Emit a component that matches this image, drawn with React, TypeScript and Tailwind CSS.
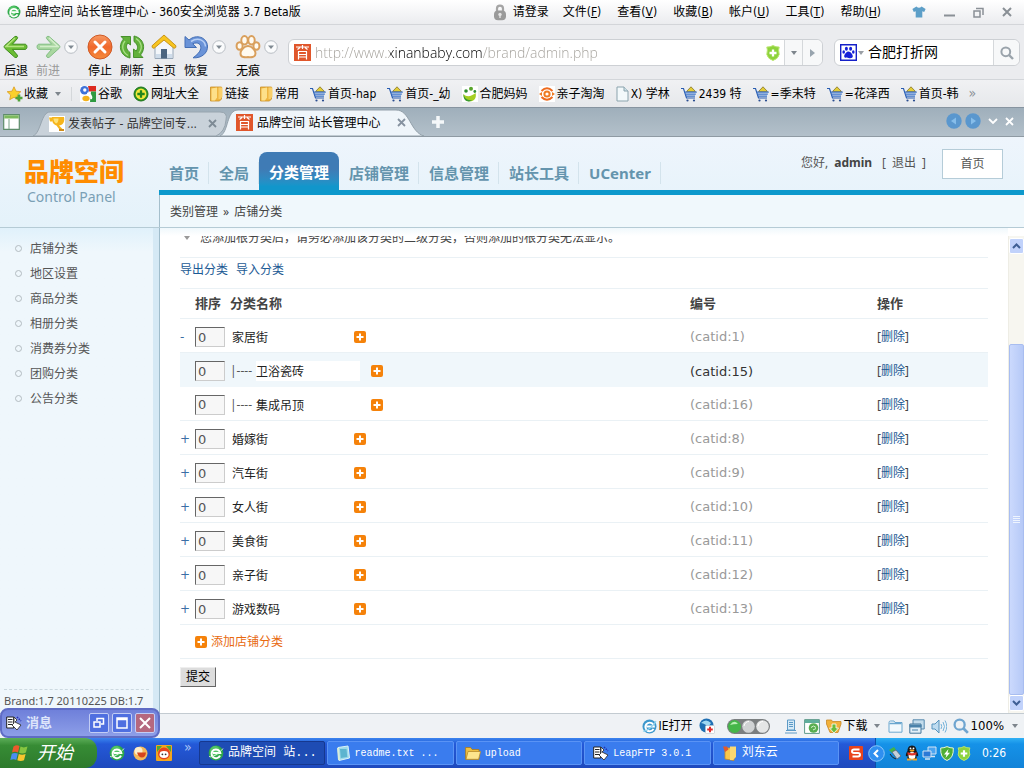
import { useState } from 'react';
import type { ReactNode } from 'react';
import clsx from 'clsx';

const uiFont = 'font-["DejaVu_Sans_Condensed","Noto_Sans_CJK_SC",sans-serif]';
const pageFont = 'font-["Noto_Sans","Noto_Sans_CJK_SC",sans-serif]';
const taskFont = 'font-["Liberation_Mono","Noto_Sans_CJK_SC",monospace]';

type IconProps = { className?: string };

/* ---------- icons ---------- */

const BrowserIcon = ({ className = 'size-4' }: IconProps) => (
  <svg viewBox="0 0 16 16" className={className}>
    <circle cx="8" cy="8" r="7.4" fill="#2fa84a" />
    <circle cx="7" cy="6" r="5" fill="#62d072" opacity="0.7" />
    <path d="M12 10.6A4.4 4.4 0 1 1 12.3 8H5" fill="none" stroke="#fff" strokeWidth="2" />
    <path d="M1 11.5C4 13 12 8 15 3.5" fill="none" stroke="#d9f7d9" strokeWidth="0.9" />
  </svg>
);

const LockIcon = () => (
  <svg viewBox="0 0 14 17" className="h-[17px] w-3.5">
    <path d="M4 8V4.6a3 3 0 0 1 6 0V8" fill="none" stroke="#a5a5a5" strokeWidth="2.2" />
    <rect x="1" y="6.6" width="12" height="9.6" rx="4" fill="#9a9a9a" />
    <circle cx="7" cy="10.4" r="1.7" fill="#e4e4e4" />
    <path d="M6.3 11h1.4v3H6.3z" fill="#e4e4e4" />
  </svg>
);

const ShirtIcon = () => (
  <svg viewBox="0 0 14 12" className="h-3 w-3.5">
    <path d="M4.4.6Q7 3 9.6.6L13.6 3 12.2 6l-1.900-.7v6.200H3.700V5.300L1.800 6 .4 3z" fill="#5d9fc8" />
  </svg>
);

const BackIcon = () => (
  <svg viewBox="0 0 26 24" className="h-6 w-[26px]">
    <path d="M12 1.500c1.500-.6 3.400.5 2.300 2.200L9.400 9.200H22c2.600 0 2.600 5.200 0 5.200H9.400l4.900 5.700c1 1.800-1 3-2.500 2.200L1.500 13Q.6 11.800 1.500 10.700z" fill="#6cbd34" stroke="#3f8c1c" strokeWidth="1" />
    <path d="M12 3 3 11.500H21" fill="none" stroke="#b4e37f" strokeWidth="1.500" />
  </svg>
);

const ForwardIcon = () => (
  <svg viewBox="0 0 26 24" className="h-6 w-[26px]">
    <path d="M14 1.500c-1.500-.6-3.400.5-2.300 2.200l4.900 5.500H4c-2.600 0-2.600 5.200 0 5.200h12.600l-4.900 5.700c-1 1.800 1 3 2.500 2.200L24.500 13q.9-1.200 0-2.300z" fill="#a9d7a0" stroke="#83bd84" strokeWidth="1" />
    <path d="m14 3 9 8.500H5" fill="none" stroke="#d4eecb" strokeWidth="1.500" />
  </svg>
);

const StopIcon = () => (
  <svg viewBox="0 0 26 26" className="size-[26px]">
    <defs>
      <linearGradient id="stop" x1="0" y1="0" x2="0" y2="1">
        <stop offset="0" stopColor="#f79a64" />
        <stop offset="0.5" stopColor="#f0682c" />
        <stop offset="1" stopColor="#f58b3c" />
      </linearGradient>
    </defs>
    <circle cx="13" cy="13" r="12" fill="url(#stop)" stroke="#cf5a26" />
    <path d="m8 8 10 10M18 8 8 18" stroke="#fff" strokeWidth="3" strokeLinecap="round" />
  </svg>
);

const RefreshIcon = () => (
  <svg viewBox="0 0 26 26" className="size-[26px]">
    <g fill="#62b13b" stroke="#3d8a22" strokeWidth="0.9" strokeLinejoin="round">
      <path d="M2 2.500h9.500V11L8.800 8.900C6.600 12 7 15.500 11 18.500v5.500C1.500 22-1.500 12 4.500 5z" />
      <path d="M24 23.500h-9.500V15l2.700 2.100c2.200-3.100 1.800-6.600-2.200-9.600V2C24.500 4 27.500 14 21.500 21z" />
    </g>
    <path d="M6 7C2 12 3.500 18 9 21.500M20 19c4-5 2.500-11-3-14.500" fill="none" stroke="#a9df86" strokeWidth="1.300" />
  </svg>
);

const HomeIcon = () => (
  <svg viewBox="0 0 26 26" className="size-[26px]">
    <path d="M4 12v12.500h18V12l-9-8z" fill="#f3f6fa" stroke="#97a7b8" />
    <path d="M5 20h16v4H5z" fill="#cfdcea" />
    <path d="M10 15h6v9.500h-6z" fill="#4c6580" />
    <path d="M13 1 1 11.800q-.3 2.400 2 2.500L13 6l10 8.300q2.300-.1 2-2.500z" fill="#f8c51f" stroke="#c8941a" />
  </svg>
);

const UndoIcon = () => (
  <svg viewBox="0 0 26 26" className="size-[26px]">
    <path d="M2 2.500 2 13.500h11.500L9.700 9.800c5-2.300 9 .5 8 5-.6 3.200-3.500 6-7.700 9C18.500 24.500 25 19 24.500 12 24 3.500 13.500-.5 6 6z" fill="#6a93d8" stroke="#446fb5" strokeLinejoin="round" />
    <path d="M8 7.500C15 3 22 6 22.500 12.500" fill="none" stroke="#b6cff5" strokeWidth="1.500" />
  </svg>
);

const pads = (
  <>
    <path d="M13 13c3 0 6.500 3.500 6.500 6.500 0 3-3.500 3-6.500 2.500-3 .5-6.500.5-6.500-2.500C6.500 16.500 10 13 13 13z" />
    <ellipse cx="9.500" cy="6.300" rx="2.200" ry="3.200" />
    <ellipse cx="16.500" cy="6.300" rx="2.200" ry="3.200" />
    <ellipse cx="4.600" cy="12" rx="2" ry="2.800" />
    <ellipse cx="21.400" cy="12" rx="2" ry="2.800" />
  </>
);

const PawIcon = () => (
  <svg viewBox="0 0 26 26" className="size-[26px]">
    <g fill="#e3ad6e" stroke="#d99f5c" strokeWidth="4">{pads}</g>
    <g fill="#fffaf0">{pads}</g>
  </svg>
);

const RoundDrop = () => (
  <svg viewBox="0 0 14 14" className="size-3.5">
    <circle cx="7" cy="7" r="6.300" fill="#fafbfc" stroke="#b9bec4" />
    <path d="M4 5.500h6L7 9z" fill="#7f8a92" />
  </svg>
);

/* red seal used as the site's favicon */
const SealIcon = () => (
  <svg viewBox="0 0 17 17" className="size-[17px]">
    <path d="M0 0h17v17H0z" fill="#e0562b" />
    <path d="M2 3h13M8.500 1v4M3.500 5.500 6 3.500M13.500 5.500 11 3.500M4 7.500h9M4.500 7.500v8M12.500 7.500v8M4.500 10.500h8M4.500 13h8" fill="none" stroke="#fff" strokeWidth="1.200" />
  </svg>
);

const ShieldPlus = ({ className = 'h-4 w-3.5' }: IconProps) => (
  <svg viewBox="0 0 14 16" className={className}>
    <path d="M.8 2Q4 2.300 7 .6q3 1.700 6.200 1.400l-.6 3 .6 4.500Q12 14 7 15.500 2 14 .8 9.500L1.400 5z" fill="#8ed33c" stroke="#b9e56f" />
    <path d="M7 4.500v7M3.500 8h7" stroke="#fff" strokeWidth="2.300" />
  </svg>
);

const BaiduPaw = () => (
  <svg viewBox="0 0 17 17" className="size-[17px]">
    <path d="M.7.7h15.600v15.600H.7z" fill="#fff" stroke="#1520c8" strokeWidth="1.400" />
    <g fill="#1520d8">
      <ellipse cx="6.400" cy="4.700" rx="1.500" ry="2" />
      <ellipse cx="10.600" cy="4.700" rx="1.500" ry="2" />
      <ellipse cx="3.700" cy="8" rx="1.300" ry="1.700" />
      <ellipse cx="13.300" cy="8" rx="1.300" ry="1.700" />
      <path d="M8.500 7.500c2 0 4.300 3 4.300 4.800S11 14.500 8.500 14s-4.300.3-4.300-1.700S6.500 7.500 8.500 7.500z" />
    </g>
  </svg>
);

const SearchIcon = ({ className = 'size-3.5' }: IconProps) => (
  <svg viewBox="0 0 14 14" className={className}>
    <circle cx="5.800" cy="5.800" r="4.400" fill="none" stroke="currentColor" strokeWidth="2" />
    <path d="m9 9 4 4" stroke="currentColor" strokeWidth="2.400" />
  </svg>
);

const StarIcon = () => (
  <svg viewBox="0 0 16 16" className="size-4">
    <path d="m7 .8 2 4.400 4.800.5-3.500 3.300 1 4.700L7 11.300l-4.300 2.400 1-4.700L.2 5.700 5 5.200z" fill="#fbd02c" stroke="#dc9a1c" strokeWidth="0.8" />
    <path d="M12 8.500v7M8.500 12h7" stroke="#4fa33a" strokeWidth="2.600" />
  </svg>
);

const GoogleIcon = () => (
  <svg viewBox="0 0 16 16" className="size-4">
    <path d="M0 0h16v16H0z" fill="#fff" />
    <path d="M8 0h8v5.500H9z" fill="#dd2b20" />
    <path d="M11 5.500h5V16h-6z" fill="#2f9a41" />
    <circle cx="4.500" cy="4.300" r="4.300" fill="#3f72d8" />
    <circle cx="4.800" cy="4" r="1.700" fill="#fff" />
    <path d="M7 7.500c3 .5 5 2 4 5.500" fill="none" stroke="#fff" strokeWidth="2" />
    <ellipse cx="6" cy="12.500" rx="3.600" ry="2.700" fill="#f5b31b" />
  </svg>
);

const SiteIcon = () => (
  <svg viewBox="0 0 16 16" className="size-4">
    <circle cx="8" cy="8" r="7" fill="#2b9323" stroke="#1b7218" />
    <circle cx="8" cy="8" r="5.400" fill="#f6e83a" />
    <path d="M8 4.300v7.400M4.300 8h7.400" stroke="#23851d" strokeWidth="2.300" />
  </svg>
);

const FolderMark = () => (
  <svg viewBox="0 0 13 16" className="h-4 w-[13px]">
    <path d="M.5 1h11v12l-2 2h-9z" fill="#eeb540" stroke="#c98f25" strokeWidth="0.8" />
    <path d="M1.500 2.500 7 1.500v10L5 14.500H1.500z" fill="#fde08a" />
    <path d="M8.500 1.500h4v9l-2 2.500h-2z" fill="#f9cf6b" />
  </svg>
);

const CartIcon = () => (
  <svg viewBox="0 0 16 16" className="size-4">
    <path d="M5.500 5.500 10 .8l4.500 4.700z" fill="#e3cd36" stroke="#857227" strokeWidth="0.8" />
    <path d="M0 2.500h2.500L5.500 12H14" fill="none" stroke="#2a5db0" strokeWidth="1.200" />
    <path d="M3.500 6.200h12.300M4.300 8.200h10.500M5 10.200h9" stroke="#3a72c8" strokeWidth="1.200" />
    <circle cx="6.500" cy="14.500" r="1.100" fill="#2a4d90" />
    <circle cx="13" cy="14.500" r="1.100" fill="#2a4d90" />
  </svg>
);

const BabyIcon = () => (
  <svg viewBox="0 0 16 16" className="size-4">
    <path d="M0 0h16v16H0z" fill="#fff" />
    <circle cx="9" cy="2.800" r="2" fill="#58a52c" />
    <circle cx="4" cy="5" r="1.800" fill="#2f8f2f" />
    <circle cx="12.800" cy="5.500" r="1.400" fill="#2f8f2f" />
    <path d="M1.500 8c3 3.500 8 2.500 12-1 1.500 5-1.500 8.500-6 8.300C4 15.200 1.500 13 1.500 8z" fill="#a5cf22" />
    <path d="M1.500 8C3 15 9 14 10 14.500 5 17 1 14 1.500 8z" fill="#3a9a30" />
  </svg>
);

const EyeRing = () => (
  <svg viewBox="0 0 16 16" className="size-4">
    <path d="M0 0h16v16H0z" fill="#fff" />
    <circle cx="8" cy="8" r="2.600" fill="none" stroke="#ef7b22" strokeWidth="2" />
    <path d="M2.500 5Q8-.5 13.500 5M2.500 11Q8 16.500 13.500 11" fill="none" stroke="#ee6a1d" strokeWidth="2" />
    <path d="M0 8l3-2v4zM16 8l-3-2v4z" fill="#ef7b22" />
  </svg>
);

const PageIcon = () => (
  <svg viewBox="0 0 13 16" className="h-4 w-[13px]">
    <path d="M1 1h7l4 4v10H1z" fill="#f3f9fb" stroke="#8ba3ad" />
    <path d="M8 1v4h4" fill="#cfe2e9" stroke="#8ba3ad" />
  </svg>
);

const TrophyIcon = () => (
  <svg viewBox="0 0 16 16" className="size-4">
    <path d="M0 0h16v16H0z" fill="#fff" />
    <path d="M0 1.500h3v4H1zM3 1h12c1 5-1 8-5 8.500l3.500 3.500-2 2-4-5.500C4 8.500 2.500 5 3 1z" fill="#f6b51c" />
    <path d="M4.500 2.500h5c0 3-1 4.500-2.500 5C5.500 6.500 4.500 4.500 4.500 2.500z" fill="#fde27a" />
    <path d="M10 14h5" stroke="#d08c1b" strokeWidth="2" />
  </svg>
);

const PanelIcon = () => (
  <svg viewBox="0 0 17 16" className="h-4 w-[17px]">
    <path d="M.7.7h15.600v14.600H.7z" fill="#fff" stroke="#5e8d6b" strokeWidth="1.200" />
    <path d="M1.300 1.300h14.400v3.200H1.300z" fill="#7cba5e" />
    <path d="M6 5v10" stroke="#7aa287" />
  </svg>
);

const PlusBadge = () => (
  <svg viewBox="0 0 12 12" className="size-3">
    <rect width="12" height="12" rx="2" fill="#f5820a" />
    <path d="M6 2.500v7M2.500 6h7" stroke="#fff" strokeWidth="2" />
  </svg>
);

const IeIcon = () => (
  <svg viewBox="0 0 15 15" className="size-[15px]">
    <circle cx="7.500" cy="7.500" r="7" fill="#3c98cd" />
    <path d="M11.500 9.800a4.300 4.300 0 1 1 .4-2.300H4.500" fill="none" stroke="#fff" strokeWidth="1.900" />
    <path d="M1 12C4 13 12 7 14 2" fill="none" stroke="#8fd3ef" strokeWidth="1.200" />
  </svg>
);

const MedicIcon = () => (
  <svg viewBox="0 0 16 16" className="size-4">
    <circle cx="7.500" cy="7.500" r="7" fill="#1f6fb3" />
    <path d="M2 5q5-5 10 0-2 4-5 2T2 5z" fill="#9fd8f2" />
    <rect x="6.500" y="7.500" width="9" height="8" rx="1" fill="#fff" stroke="#b8c4cc" strokeWidth="0.600" />
    <path d="M11 8.800v5.500M8.200 11.500h5.600" stroke="#e02d2d" strokeWidth="2" />
  </svg>
);

const ToggleDots = () => (
  <svg viewBox="0 0 43 15" className="h-[15px] w-[43px]">
    <rect width="43" height="15" rx="7.500" fill="#7b7f80" />
    <circle cx="7.500" cy="7.500" r="6.500" fill="#45b649" />
    <path d="M3 6q4-6 8-1-5 0-8 1z" fill="#b9efb4" />
    <circle cx="21.500" cy="7.500" r="6.300" fill="#d0d3d4" />
    <circle cx="35.500" cy="7.500" r="6.300" fill="#e4e6e6" />
    <path d="M17 7q1-4.500 5-4.500M31 7q1-4.500 5-4.500" stroke="#fff" fill="none" />
  </svg>
);

const ReaderIcon = () => (
  <svg viewBox="0 0 14 15" className="h-[15px] w-3.5">
    <path d="M3.500 1h7v10h-7z" fill="#d5e9f6" stroke="#5c9ac6" />
    <path d="M5 3.500h4M5 5.500h4M5 7.500h4M1 14h12M2 11.500h10" stroke="#5c9ac6" />
  </svg>
);

const WebToolIcon = () => (
  <svg viewBox="0 0 16 15" className="h-[15px] w-4">
    <path d="M.6.6h14.800v13.800H.6z" fill="#fff" stroke="#5e9a8a" />
    <path d="M1 1h14v3H1z" fill="#5fae9b" />
    <circle cx="9.500" cy="9" r="4.800" fill="#58ad4f" />
    <path d="M7 8.500q2.500-3 5 0M9 11l3-1.500" fill="none" stroke="#d8f3cf" />
  </svg>
);

const DownloadIcon = () => (
  <svg viewBox="0 0 16 15" className="h-[15px] w-4">
    <path d="M.5 1h5l1 1.500H15V5l-3 8.500H4L.5 5z" fill="#f2b13a" stroke="#c88725" strokeWidth="0.800" />
    <path d="M8 14 3.500 9H6V5h4v4h2.500z" fill="#69bb3b" stroke="#fff" strokeWidth="0.800" />
  </svg>
);

const WindowIcon = () => (
  <svg viewBox="0 0 15 13" className="h-[13px] w-[15px]">
    <path d="M1 2.500Q1 1 2.500 1H6l1 1.500h7v9.700H1z" fill="#f2f9fd" stroke="#6ba7cf" />
    <path d="M1.500 3.500h12" stroke="#6ba7cf" strokeWidth="1.500" />
  </svg>
);

const WindowsIcon = () => (
  <svg viewBox="0 0 16 15" className="h-[15px] w-4">
    <path d="M4 .8h11.200V10H4z" fill="#c3dcec" stroke="#5689ad" />
    <path d="M.8 5H12v9.200H.8z" fill="#e3f0f8" stroke="#45779b" />
    <path d="M1 6h11v2H1zM3 11h6" fill="#4b82aa" stroke="#4b82aa" />
  </svg>
);

const SpeakerIcon = () => (
  <svg viewBox="0 0 16 15" className="h-[15px] w-4">
    <path d="M1 5h3l4-4v13l-4-4H1z" fill="#bfdcf0" stroke="#5793bd" />
    <path d="M10 5q1.500 2.500 0 5M12 3q3 4.500 0 9M14 1.500q3.500 6 0 12" fill="none" stroke="#74b2da" />
  </svg>
);

const WindowsFlag = () => (
  <svg viewBox="0 0 19 18" className="h-[18px] w-[19px]">
    <path d="M3.500 2.500Q6.500.5 9.500 2L8 8.500q-3-1.500-6 0z" fill="#ec5a2c" />
    <path d="M10.500 2.600q3 1.600 7 0l-1.600 6q-3.500 1.700-6.800.2z" fill="#86c540" />
    <path d="M1.800 9.700q3-1.500 6-.1L6.300 16q-3-1.400-6 .1z" fill="#4b8df0" />
    <path d="M8.800 10q3.300 1.500 6.800 0L14 16.300q-3.300 1.500-6.700 0z" fill="#f8c62e" />
  </svg>
);

const ChatBall = () => (
  <svg viewBox="0 0 15 15" className="size-[15px]">
    <circle cx="7.500" cy="7.500" r="7" fill="#f5b95a" />
    <circle cx="5.500" cy="5" r="4" fill="#fdeecb" />
    <path d="M4 6.500h9q-.5 5-4 5t-5-5z" fill="#d6451d" />
  </svg>
);

const MascotIcon = () => (
  <svg viewBox="0 0 16 16" className="size-4">
    <rect width="16" height="16" rx="1" fill="#f3a61e" />
    <path d="M1 1h5l-5 6zM15 1h-5l5 6z" fill="#4ba83c" />
    <circle cx="8" cy="8.500" r="6" fill="#e44420" />
    <ellipse cx="8" cy="9.500" rx="4.500" ry="3.400" fill="#fff" />
    <circle cx="6.400" cy="9.300" r="0.900" fill="#333" />
    <circle cx="9.600" cy="9.300" r="0.900" fill="#333" />
  </svg>
);

const LeapIcon = () => (
  <svg viewBox="0 0 16 15" className="h-[15px] w-4">
    <path d="M.7 1h7v11h-7z" fill="#fff" stroke="#222" />
    <path d="M2 3.500h4.500M2 6h4.500M2 8.500h4.500" stroke="#222" strokeWidth="1.200" />
    <path d="M8 1l3 3-2 2 6 3-4 5-5-5 2-2z" fill="#fff" stroke="#333" strokeWidth="0.900" />
    <path d="m11 1 4 4" stroke="#2330b0" strokeWidth="1.500" strokeDasharray="1.500 1" />
  </svg>
);

const NoteIcon = () => (
  <svg viewBox="0 0 14 16" className="h-4 w-3.5">
    <path d="M2 2.500 12 1l1.500 12L3 15.500z" fill="#9bd9ea" stroke="#d9f2f8" />
    <path d="M4 4h6.500l.8 8-6.500 1z" fill="#5cb4cf" />
    <path d="M1 3h2l1 12H2z" fill="#d8ecd9" />
  </svg>
);

const FolderIcon = () => (
  <svg viewBox="0 0 16 14" className="h-3.5 w-4">
    <path d="M.6 1.500h5l1.500 2H14v9.800H.6z" fill="#efc042" stroke="#a8791c" strokeWidth="0.800" />
    <path d="M3 5.500h12.600l-2 7.800H1z" fill="#fde58d" stroke="#b98b2a" strokeWidth="0.800" />
  </svg>
);

const PinnedNote = () => (
  <svg viewBox="0 0 16 16" className="size-4">
    <path d="M3 3h9v12.500L3 14z" fill="#f8c64c" stroke="#c88a1f" strokeWidth="0.800" />
    <path d="M8 1.500h6V12l-3 3H8z" fill="#fbd872" />
    <path d="M1 1.500h4l1.500 3L3 7z" fill="#e25a2c" />
  </svg>
);

const SogouIcon = () => (
  <svg viewBox="0 0 14 14" className="size-3.5">
    <rect width="14" height="14" rx="1" fill="#e8441c" />
    <path d="M10.500 3.500H5q-2 0-2 1.700T5 7h4q2 0 2 1.700t-2 1.800H3.500" fill="none" stroke="#fff" strokeWidth="1.900" />
  </svg>
);

const UsbIcon = () => (
  <svg viewBox="0 0 14 14" className="size-3.5">
    <path d="m1 4 5-3 2 3-4 3z" fill="#43b348" />
    <path d="m4 6 4-2 5 6-4 3z" fill="#c6cfd8" stroke="#55606c" strokeWidth="0.700" />
    <path d="M2 8q2 4 6 5" fill="none" stroke="#222" />
  </svg>
);

const PenguinIcon = () => (
  <svg viewBox="0 0 14 16" className="h-4 w-3.5">
    <path d="M7 .5c3.500 0 4.500 3 4.500 5.500 1.500 2 2 4 1.500 5.500l-1.500-1V14H2.500v-3.500l-1.500 1C.500 10 1 8 2.500 6 2.500 3.500 3.500.5 7 .5z" fill="#16181c" />
    <ellipse cx="7" cy="10.800" rx="3.500" ry="3.700" fill="#fff" />
    <path d="M2.500 7q4.500 2.500 9 0v2.500q-4.500 2-9 0z" fill="#e03426" />
    <ellipse cx="7" cy="5.600" rx="2.500" ry="1.100" fill="#f5a623" />
    <path d="M2 14.500h4.500M7.500 14.500H12" stroke="#f5a623" strokeWidth="1.800" />
    <circle cx="5.500" cy="3.400" r="0.900" fill="#fff" />
    <circle cx="8.500" cy="3.400" r="0.900" fill="#fff" />
  </svg>
);

const NetworkIcon = () => (
  <svg viewBox="0 0 15 15" className="size-[15px]">
    <path d="M6 1h8v7H6z" fill="#4aa4f0" stroke="#d4e4f4" />
    <path d="M1 5h8v6H1z" fill="#2b79d6" stroke="#d4e4f4" />
    <path d="M3 13h5M9 10.500h4" stroke="#d4e4f4" strokeWidth="1.600" />
  </svg>
);

const BoltShield = () => (
  <svg viewBox="0 0 14 15" className="h-[15px] w-3.5">
    <path d="M.7 2Q4 2 7 .6 10 2 13.300 2q.6 10-6.300 12.500Q.1 12 .7 2z" fill="#4fae35" stroke="#e6f5d8" />
    <path d="M8.500 3 4 8.500h2.500L5.500 12 10 6.800H7.500z" fill="#fff" />
  </svg>
);

/* ---------- small pieces ---------- */

const Caret = ({ className = 'text-[#7d858c]' }: IconProps) => (
  <svg viewBox="0 0 6 4" className={clsx('h-1 w-1.5', className)}>
    <path d="M0 0h6L3 4z" fill="currentColor" />
  </svg>
);

const tools: { label: string; icon: ReactNode; drop?: boolean; off?: boolean }[] = [
  { label: '后退', icon: <BackIcon /> },
  { label: '前进', icon: <ForwardIcon />, drop: true, off: true },
  { label: '停止', icon: <StopIcon /> },
  { label: '刷新', icon: <RefreshIcon /> },
  { label: '主页', icon: <HomeIcon /> },
  { label: '恢复', icon: <UndoIcon />, drop: true },
  { label: '无痕', icon: <PawIcon />, drop: true },
];

const menus = [
  ['文件', 'F'],
  ['查看', 'V'],
  ['收藏', 'B'],
  ['帐户', 'U'],
  ['工具', 'T'],
  ['帮助', 'H'],
];

const bookmarks = [
  { label: '谷歌', icon: <GoogleIcon /> },
  { label: '网址大全', icon: <SiteIcon /> },
  { label: '链接', icon: <FolderMark /> },
  { label: '常用', icon: <FolderMark /> },
  { label: '首页-hap', icon: <CartIcon /> },
  { label: '首页-_幼', icon: <CartIcon /> },
  { label: '合肥妈妈', icon: <BabyIcon /> },
  { label: '亲子淘淘', icon: <EyeRing /> },
  { label: 'X) 学林', icon: <PageIcon /> },
  { label: '2439 特', icon: <CartIcon /> },
  { label: '=季末特', icon: <CartIcon /> },
  { label: '=花泽西', icon: <CartIcon /> },
  { label: '首页-韩', icon: <CartIcon /> },
];

const navItems = ['首页', '全局', '分类管理', '店铺管理', '信息管理', '站长工具', 'UCenter'];

const sideItems = ['店铺分类', '地区设置', '商品分类', '相册分类', '消费券分类', '团购分类', '公告分类'];

const categories = [
  { id: 1, name: '家居街', toggle: '-' },
  { id: 15, name: '卫浴瓷砖', child: true },
  { id: 16, name: '集成吊顶', child: true },
  { id: 8, name: '婚嫁街', toggle: '+' },
  { id: 9, name: '汽车街', toggle: '+' },
  { id: 10, name: '女人街', toggle: '+' },
  { id: 11, name: '美食街', toggle: '+' },
  { id: 12, name: '亲子街', toggle: '+' },
  { id: 13, name: '游戏数码', toggle: '+' },
];

const tasks = [
  { label: '品牌空间 站...', icon: <BrowserIcon className="size-4" />, active: true },
  { label: 'readme.txt ...', icon: <NoteIcon /> },
  { label: 'upload', icon: <FolderIcon /> },
  { label: 'LeapFTP 3.0.1', icon: <LeapIcon /> },
  { label: '刘东云', icon: <PinnedNote /> },
];

/* ---------- browser chrome ---------- */

function TitleBar() {
  return (
    <div className="flex h-[25px] shrink-0 items-center border-b border-[#d3d5d9] bg-linear-to-b from-white to-[#ebecef] pr-3 pl-[7px]">
      <BrowserIcon className="size-3.5" />
      <h1 className="ml-1 flex-1">品牌空间 站长管理中心 - 360安全浏览器 3.7 Beta版</h1>
      <button className="mr-3.5 flex items-center gap-1.5">
        <LockIcon />
        请登录
      </button>
      <div className="flex gap-4">
        {menus.map(([label, key]) => (
          <button key={key}>
            {label}(<u>{key}</u>)
          </button>
        ))}
      </div>
      <div className="ml-[31px] flex items-center gap-[18px] text-[#8a9096]">
        <button aria-label="换肤"><ShirtIcon /></button>
        <button aria-label="最小化">
          <svg viewBox="0 0 11 11" className="size-[11px]"><path d="M0 8.500h11" stroke="currentColor" strokeWidth="2" /></svg>
        </button>
        <button aria-label="还原">
          <svg viewBox="0 0 11 11" className="size-[11px]">
            <path d="M1 4h6v6H1zM3 1.500h7v6.500" fill="none" stroke="currentColor" strokeWidth="1.500" />
          </svg>
        </button>
        <button aria-label="关闭">
          <svg viewBox="0 0 10 10" className="size-2.5"><path d="m1 1 8 8M9 1 1 9" stroke="currentColor" strokeWidth="2" /></svg>
        </button>
      </div>
    </div>
  );
}

function Toolbar() {
  const [url, setUrl] = useState('http://www.xinanbaby.com/brand/admin.php');
  const [query, setQuery] = useState('合肥打折网');

  return (
    <div className="flex h-[55px] shrink-0 items-start border-b border-[#d3d6da] bg-[#ebecef] pr-1">
      <div className="flex w-72 shrink-0 pt-2">
        {tools.map(tool => (
          <div key={tool.label} className={clsx('flex', tool.drop && 'mr-1.5')}>
            <button className={clsx('flex w-8 flex-col items-center', tool.off && 'text-[#9a9a9a]')}>
              <span className="flex h-[27px] items-center">{tool.icon}</span>
              <span className="mt-[3px] leading-4 whitespace-nowrap">{tool.label}</span>
            </button>
            {tool.drop && (
              <button aria-label={`${tool.label}列表`} className="h-[27px] w-3.5"><RoundDrop /></button>
            )}
          </div>
        ))}
      </div>
      <div className="mt-3.5 flex h-[27px] min-w-0 flex-1 items-center rounded-md border border-[#cdd0d4] bg-white pl-[5px]">
        <SealIcon />
        <input
          aria-label="地址"
          value={url}
          onChange={e => setUrl(e.target.value)}
          className='ml-1 min-w-0 flex-1 bg-[linear-gradient(90deg,#a3a09a_75px,#000_75px,#000_167px,#a3a09a_167px)] bg-clip-text font-["Open_Sans",sans-serif] text-[14px] font-light text-transparent caret-black outline-none'
        />
        <ShieldPlus />
        <button aria-label="历史地址" className="ml-1 flex h-full w-[19px] items-center justify-center border-x border-[#d5d8db] bg-[#f7f8f9]"><Caret /></button>
        <button aria-label="转到" className="flex h-full w-[19px] items-center justify-center rounded-r-md bg-[#f7f8f9]">
          <svg viewBox="0 0 5 8" className="h-2 w-[5px]"><path d="M0 0v8l5-4z" fill="#98a4ae" /></svg>
        </button>
      </div>
      <div className="mt-3.5 ml-[11px] flex h-[27px] w-[186px] items-center rounded-md border border-[#cdd0d4] bg-white pl-[5px]">
        <BaiduPaw />
        <Caret className="ml-px text-[#9a9fa5]" />
        <input
          aria-label="搜索"
          value={query}
          onChange={e => setQuery(e.target.value)}
          className="ml-1 min-w-0 flex-1 text-[14px] outline-none"
        />
        <button aria-label="搜索" className="flex h-full w-[26px] items-center justify-center rounded-r-md border-l border-[#d5d8db] bg-[#f7f8f9] text-[#9aa3ab]"><SearchIcon /></button>
      </div>
    </div>
  );
}

function BookmarkBar() {
  return (
    <div className="flex h-[27px] shrink-0 items-center bg-linear-to-b from-[#f0f1f3] to-[#e6e8eb] pl-[7px] whitespace-nowrap">
      <button className="flex items-center gap-px">
        <StarIcon />
        收藏
        <Caret className="ml-1.5 text-[#7d858c]" />
      </button>
      <div className="mx-2 ml-2.5 h-3.5 w-px bg-[#d4d7da]" />
      <div className="flex gap-[11px]">
        {bookmarks.map(b => (
          <a key={b.label} href="#" className="flex items-center gap-0.5">
            {b.icon}
            {b.label}
          </a>
        ))}
      </div>
      <button className="ml-2.5 text-[14px] text-[#8a9096]">»</button>
    </div>
  );
}

function TabStrip() {
  return (
    <div className="flex h-[30px] shrink-0 items-end border-t border-t-[#8794a0] border-b border-b-[#8f9aa3] bg-linear-to-b from-[#9fafbb] to-[#b3c0ca]">
      <button aria-label="侧边栏" className="mb-1.5 ml-[3px]"><PanelIcon /></button>
      <div className="relative ml-[13px] flex h-[25px] w-[196px] items-center pl-4 text-[#333]">
        <svg viewBox="0 0 196 25" preserveAspectRatio="none" className="absolute inset-0 size-full">
          <path d="M0 25C8 22 8 1 17 1h170q8 0 6 8-1 12-10 16z" fill="#c9d2da" stroke="#97a4ae" />
        </svg>
        <a href="#" className="relative flex flex-1 items-center gap-[3px] whitespace-nowrap">
          <TrophyIcon />
          发表帖子 - 品牌空间专...
        </a>
        <button aria-label="关闭标签" className="relative mr-3">
          <svg viewBox="0 0 9 9" className="size-[9px]"><path d="m1 1 7 7M8 1 1 8" stroke="#7d8a95" strokeWidth="1.800" /></svg>
        </button>
      </div>
      <div className="relative -ml-[9px] flex h-[27px] w-[204px] items-center pl-4">
        <svg viewBox="0 0 204 27" preserveAspectRatio="none" className="absolute inset-0 size-full">
          <path d="M0 27C9 23 6 1 18 1h158c14 0 14 22 28 26z" fill="#eff5fa" stroke="#93a0aa" />
        </svg>
        <a href="#" className="relative flex flex-1 items-center gap-1 whitespace-nowrap">
          <SealIcon />
          品牌空间 站长管理中心
        </a>
        <button aria-label="关闭标签" className="relative mr-[18px]">
          <svg viewBox="0 0 9 9" className="size-[9px]"><path d="m1 1 7 7M8 1 1 8" stroke="#8692a0" strokeWidth="1.800" /></svg>
        </button>
      </div>
      <button aria-label="新标签" className="mb-2 ml-2">
        <svg viewBox="0 0 12 12" className="size-3"><path d="M6 0v12M0 6h12" stroke="#f4f7f9" strokeWidth="3.500" /></svg>
      </button>
      <div className="mr-2.5 mb-[7px] ml-auto flex items-center gap-[3px]">
        {['M10 4.500v7L5 8z', 'M6 4.500v7l5-3.500z'].map(d => (
          <button key={d} aria-label="切换标签">
            <svg viewBox="0 0 16 16" className="size-4">
              <circle cx="8" cy="8" r="7.700" fill="#5a97ce" />
              <path d={d} fill="#86bdea" />
            </svg>
          </button>
        ))}
        <button aria-label="标签列表" className="ml-1">
          <svg viewBox="0 0 10 8" className="h-2 w-2.5"><path d="m1 2 4 4 4-4" fill="none" stroke="#fff" strokeWidth="1.800" /></svg>
        </button>
        <button aria-label="关闭全部" className="ml-1">
          <svg viewBox="0 0 9 9" className="size-[9px]"><path d="m1 1 7 7M8 1 1 8" stroke="#fff" strokeWidth="1.800" /></svg>
        </button>
      </div>
    </div>
  );
}

/* ---------- admin page ---------- */

function PageHeader() {
  return (
    <header className="flex h-[91px] shrink-0 border-b border-[#b5cbd5] bg-linear-to-b from-[#eef5fc] to-[#e4f2fa]">
      <div className="flex w-[159px] shrink-0 flex-col pt-[17px] pl-6">
        <p className='font-["Noto_Sans_CJK_SC",sans-serif] text-[25px] leading-8 font-black text-[#ff8c00]'>品牌空间</p>
        <p className="mt-0.5 pl-[3px] text-[14px] leading-[18px] text-[#7aa0b5]">Control Panel</p>
      </div>
      <div className="flex min-w-0 flex-1 flex-col">
        <div className="flex flex-1 items-end justify-between border-b-[5px] border-[#0d99cc]">
          <nav className="flex items-end text-[15px] font-bold text-[#6494ad]">
            {navItems.map(item => (
              <a
                key={item}
                href="#"
                className={clsx(
                  'pl-2.5',
                  item === '分类管理'
                    ? 'h-[38px] rounded-t-lg bg-linear-to-b from-[#3f7bb5] from-45% to-[#1196cb] to-90% pr-2.5 leading-10 text-white'
                    : 'mb-1.5 h-[22px] border-r border-[#d3e3ec] pr-[9px] leading-[22px]',
                )}
              >
                {item}
              </a>
            ))}
          </nav>
          <div className="mb-[11px] flex items-start pr-[21px] text-[12px] text-[#555]">
            <p className="flex gap-1.5 pt-[5px] leading-[18px]">
              <span>您好,</span>
              <b className="mr-1 text-[#444]">admin</b>
              <span>[</span>
              <a href="#">退出</a>
              <span>]</span>
            </p>
            <a href="#" className="ml-4 flex h-[30px] w-[61px] items-center justify-center border border-[#b5ccd8] bg-white">首页</a>
          </div>
        </div>
        <div className="flex h-8 items-center gap-[5px] border-l border-[#a5bfcc] bg-[#f0f8fc] pt-0.5 pl-2.5 text-[12px] text-[#444]">
          <span>类别管理</span>
          <span>»</span>
          <span>店铺分类</span>
        </div>
      </div>
    </header>
  );
}

function Sidebar() {
  return (
    <aside className="flex w-[160px] shrink-0 flex-col border-r border-[#9fbccb] bg-[#eff7fc] text-[12px] text-[#555]">
      <div className="flex flex-1 flex-col border-r-[6px] border-[#d5e9f5] bg-linear-to-b from-[#e0f1fb] to-[#eff7fc] to-[24px]">
        <ul className="pt-2">
          {sideItems.map(item => (
            <li key={item}>
              <a href="#" className="flex h-[25px] items-center gap-2 pl-[15px]">
                <span className="size-[7px] rounded-full border border-[#b3bcc1]" />
                {item}
              </a>
            </li>
          ))}
        </ul>
        <p className="mx-1 mt-auto mb-1 border-t border-dashed border-[#ccd9e0] pt-[3px] text-[11px] leading-4 whitespace-nowrap">
          Brand:1.7 20110225 DB:1.7
        </p>
      </div>
    </aside>
  );
}

function CategoryTable() {
  const [names, setNames] = useState(categories.map(c => c.name));
  const [orders, setOrders] = useState(categories.map(() => '0'));

  const change = (list: string[], i: number, value: string) => list.map((v, n) => (n === i ? value : v));

  return (
    <table className="w-full table-fixed text-left text-[12px]">
      <colgroup>
        <col className="w-[15px]" />
        <col className="w-[35px]" />
        <col />
        <col className="w-[187px]" />
        <col className="w-[111px]" />
      </colgroup>
      <thead>
        <tr className="h-[30px] border-y border-[#eaf1f5] text-[13px] text-[#444]">
          <th />
          <th className="whitespace-nowrap">排序</th>
          <th>分类名称</th>
          <th>编号</th>
          <th>操作</th>
        </tr>
      </thead>
      <tbody>
        {categories.map((c, i) => (
          <tr
            key={c.id}
            className={clsx('h-[34px] *:pt-[3px]', c.id === 15 ? 'bg-[#f0f7fb]' : 'border-b border-[#eaf1f5]')}
          >
            <td className='font-["DejaVu_Sans",sans-serif] text-[12px] text-[#3b6ea5]'>
              {c.toggle && <button>{c.toggle}</button>}
            </td>
            <td>
              <input
                aria-label={`${c.name}排序`}
                value={orders[i]}
                onChange={e => setOrders(change(orders, i, e.target.value))}
                className='block h-5 w-[30px] border border-t-[#666] border-r-[#ccc] border-b-[#ccc] border-l-[#666] bg-[#f7f7f7] pl-0.5 font-["DejaVu_Sans",sans-serif] text-[13px] text-[#555] outline-none'
              />
            </td>
            <td>
              <div className="flex items-center">
                {c.child && <span className="w-[26px] whitespace-nowrap text-[#555]">|----</span>}
                <input
                  aria-label={`分类名称 ${c.id}`}
                  value={names[i]}
                  onChange={e => setNames(change(names, i, e.target.value))}
                  className={clsx(
                    'h-5 text-[#222] outline-none',
                    c.child ? 'w-26' : 'w-[113px] pl-0.5',
                    c.id === 15 && 'bg-white',
                  )}
                />
                <button aria-label={`添加 ${c.name}`} className="ml-[11px]"><PlusBadge /></button>
              </div>
            </td>
            <td className={clsx('font-["DejaVu_Sans",sans-serif] text-[13px]', c.id === 15 ? 'text-[#333]' : 'text-[#999]')}>
              (catid:{c.id})
            </td>
            <td className="text-[#444]">
              [<a href="#" className="text-[#1c5a94]">删除</a>]
            </td>
          </tr>
        ))}
        <tr className="h-[34px] border-b border-[#eaf1f5]">
          <td />
          <td colSpan={4}>
            <a href="#" className="flex items-center gap-1 text-[#e86a10]">
              <PlusBadge />
              添加店铺分类
            </a>
          </td>
        </tr>
      </tbody>
    </table>
  );
}

function ScrollBar() {
  const button = 'flex h-4 w-full items-center justify-center rounded-xs border border-white bg-[#c1d2fb] text-[#3f5f95]';
  return (
    <div className="mt-2 flex w-4 shrink-0 flex-col border-l border-[#eeede5] bg-[#f7f6f0] py-0.5">
      <button aria-label="向上" className={button}>
        <svg viewBox="0 0 9 6" className="h-1.5 w-[9px]"><path d="m1 5 3.500-3.500L8 5" fill="none" stroke="currentColor" strokeWidth="2" /></svg>
      </button>
      <div className="flex flex-1 flex-col">
        <div className="grow-[92]" />
        <div className="flex grow-[350] flex-col items-center justify-center gap-px rounded-xs border border-[#a8bdf0] bg-linear-to-r from-[#cbd9fd] to-[#b6c9f7]">
          {[0, 1, 2, 3].map(n => <span key={n} className="h-px w-[7px] bg-[#eef4fe]" />)}
        </div>
      </div>
      <button aria-label="向下" className={button}>
        <svg viewBox="0 0 9 6" className="h-1.5 w-[9px]"><path d="m1 1 3.500 3.500L8 1" fill="none" stroke="currentColor" strokeWidth="2" /></svg>
      </button>
    </div>
  );
}

/* ---------- bottom bars ---------- */

function StatusBar() {
  return (
    <div className="flex h-[25px] shrink-0 items-center justify-end border-t border-[#c3cbd1] bg-[#eff2f5] pr-1.5">
      <button className="flex items-center gap-0.5"><IeIcon />IE打开</button>
      <button aria-label="医生" className="ml-1.5"><MedicIcon /></button>
      <button aria-label="状态" className="ml-3"><ToggleDots /></button>
      <div className="ml-3.5 flex items-center gap-1.5">
        <button aria-label="阅读"><ReaderIcon /></button>
        <button aria-label="网页工具"><WebToolIcon /></button>
        <button className="flex items-center gap-0.5"><DownloadIcon />下载<Caret className="ml-1 text-[#7d858c]" /></button>
      </div>
      <div className="ml-2 flex items-center gap-1.5">
        <button aria-label="窗口"><WindowIcon /></button>
        <button aria-label="多窗口"><WindowsIcon /></button>
        <button aria-label="声音"><SpeakerIcon /></button>
        <button className="flex items-center gap-0.5">
          <SearchIcon className="size-4 text-[#6fa5d0]" />
          <span className="text-[13px]">100%</span>
          <Caret className="ml-1.5 text-[#7d858c]" />
        </button>
      </div>
    </div>
  );
}

function MessageWindow() {
  const button = 'flex size-5 items-center justify-center rounded-xs border border-[#c2cdf5]';
  return (
    <div className={`absolute bottom-[30px] left-0 flex h-[30px] w-40 items-center rounded-lg border-2 border-[#5f6cc4] bg-linear-to-b from-[#6f80da] to-[#8d9ee8] pr-[3px] pl-1 ${uiFont}`}>
      <LeapIcon />
      <span className="ml-1 flex-1 text-[13px] font-bold text-[#dde5fb]">消息</span>
      <div className="flex gap-[3px]">
        <button aria-label="还原窗口" className={`${button} bg-[#4f6fe0]`}>
          <svg viewBox="0 0 12 12" className="size-3"><path d="M1 5h6v5H1zM4 4V1.500h6.500V7H8" fill="none" stroke="#fff" strokeWidth="1.500" /></svg>
        </button>
        <button aria-label="最大化窗口" className={`${button} bg-[#4f6fe0]`}>
          <svg viewBox="0 0 12 12" className="size-3"><path d="M1 1h10v10H1zM1 2.500h10" fill="none" stroke="#fff" strokeWidth="1.500" /></svg>
        </button>
        <button aria-label="关闭窗口" className={`${button} bg-[#b5687f]`}>
          <svg viewBox="0 0 12 12" className="size-3"><path d="m1 1 10 10M11 1 1 11" stroke="#fff" strokeWidth="2" /></svg>
        </button>
      </div>
    </div>
  );
}

function TaskBar() {
  return (
    <div className="flex h-[30px] shrink-0 items-center bg-linear-to-b from-[#3b84ee] via-[#2459d8] via-20% to-[#1e49bd] text-white">
      <button className="flex h-full w-[97px] items-center gap-2 rounded-r-xl bg-linear-to-b from-[#5cae58] via-[#378c35] via-25% to-[#2d7a2c] pl-2.5">
        <WindowsFlag />
        <span className="text-[18px] leading-6 italic">开始</span>
      </button>
      <div className="ml-3 flex flex-1 items-center gap-2">
        <button aria-label="浏览器"><BrowserIcon className="size-4" /></button>
        <button aria-label="聊天"><ChatBall /></button>
        <button aria-label="游戏"><MascotIcon /></button>
        <button className="-mt-3 ml-1 text-[14px] leading-4 text-[#a9c6f7]">»</button>
      </div>
      <div className={`flex w-[640px] gap-0.5 ${taskFont}`}>
        {tasks.map(task => (
          <button
            key={task.label}
            className={clsx(
              'flex h-6 min-w-0 flex-1 items-center gap-1 rounded-xs border pl-2 whitespace-nowrap',
              /[a-z]/.test(task.label) ? 'text-[10px]' : 'text-[12px]',
              task.active ? 'border-[#16388f] bg-[#1e4cb4]' : 'border-[#5a93f5] bg-[#3a7cee]',
            )}
          >
            {task.icon}
            {task.label}
          </button>
        ))}
      </div>
      <button aria-label="输入法" className="ml-2.5"><SogouIcon /></button>
      <div className="ml-3 flex h-full w-[149px] items-center gap-[3px] border-l border-[#0c4ea8] bg-linear-to-b from-[#2fb0f4] via-[#1592e8] via-20% to-[#1283d8]">
        <button aria-label="展开" className="-ml-2">
          <svg viewBox="0 0 17 17" className="size-[17px]">
            <circle cx="8.500" cy="8.500" r="7.800" fill="#2f8ff0" stroke="#8cc9fa" />
            <path d="M10 5 6.500 8.500 10 12" fill="none" stroke="#fff" strokeWidth="2" />
          </svg>
        </button>
        <UsbIcon />
        <PenguinIcon />
        <NetworkIcon />
        <BoltShield />
        <ShieldPlus className="h-[15px] w-3.5" />
        <time className={`ml-2 text-[12px] ${uiFont}`}>0:26</time>
      </div>
    </div>
  );
}

export default function App() {
  return (
    <div className={`relative flex h-screen flex-col overflow-hidden bg-white text-[12px] text-black ${uiFont}`}>
      <TitleBar />
      <Toolbar />
      <BookmarkBar />
      <TabStrip />
      <div className={`flex min-h-0 flex-1 flex-col ${pageFont}`}>
        <PageHeader />
        <div className="flex min-h-0 flex-1">
          <Sidebar />
          <main className="min-w-0 flex-1 bg-linear-to-b from-[#f0f8fc] to-white to-[8px] pt-2 pr-5 pl-5 text-[12px]">
            <div className="flex h-[9px] items-end overflow-hidden text-[#444]">
              <p className="flex items-center gap-2.5 pl-1 leading-[14px] whitespace-nowrap">
                <Caret className="text-[#999]" />
                您添加根分类后，请务必添加该分类的二级分类，否则添加的根分类无法显示。
              </p>
            </div>
            <div className="mt-3 flex h-[31px] gap-2 border-t border-[#eaf1f5] pt-[3px] text-[#1c5a94]">
              <a href="#">导出分类</a>
              <a href="#">导入分类</a>
            </div>
            <CategoryTable />
            <button className="mt-2 h-5 w-9 border border-t-[#eee] border-r-[#666] border-b-[#666] border-l-[#eee] bg-[#ddd] leading-4 text-black">
              提交
            </button>
          </main>
          <ScrollBar />
        </div>
      </div>
      <StatusBar />
      <TaskBar />
      <MessageWindow />
    </div>
  );
}
